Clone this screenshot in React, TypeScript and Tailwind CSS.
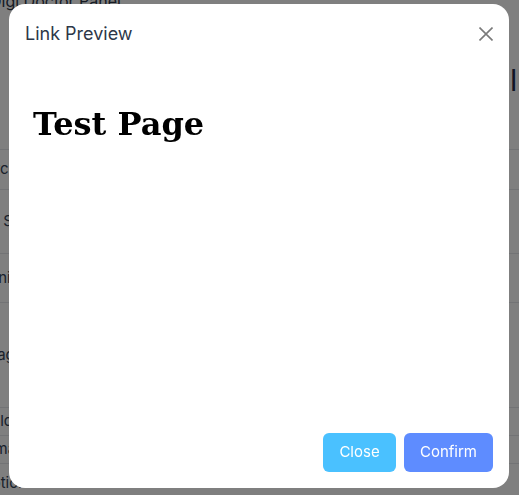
const rows = [
  { label: "Circles", h: "h-[40px]" },
  { label: "Bg Status", h: "h-[64px]" },
  { label: "Clinic", h: "h-[49px]" },
  { label: "Images", h: "h-[105px]" },
  { label: "Hold", h: "h-[28px]" },
  { label: "@mail", h: "h-[28px]" },
  { label: "Options", h: "h-[40px]" },
];

const XIcon = () => (
  <svg width="14" height="14" viewBox="0 0 14 14" fill="none">
    <path d="M0.5 0.5L13.5 13.5M13.5 0.5L0.5 13.5" stroke="#7a7a7a" strokeWidth="1.6" />
  </svg>
);

const LinkPreviewModal = () => {
  return (
    <div className="fixed inset-0 z-50 flex items-start justify-center bg-black/50 pt-1">
      <div className="-ml-px flex h-[484px] w-[500px] flex-col rounded-2xl bg-white">
        {/* Header */}
        <div className="flex items-center justify-between px-4 pt-4">
          <h2 className="h-7 text-[18px] leading-7 text-[#2d3748]" style={{ fontFamily: "Inter, sans-serif" }}>
            Link Preview
          </h2>
          <button className="flex h-7 w-[14px] items-center justify-center">
            <XIcon />
          </button>
        </div>

        {/* Preview frame */}
        <div className="flex-1 px-4 pt-[57px]">
          <div className="px-2">
            <h1
              className="text-[32px] font-bold text-black"
              style={{ fontFamily: '"DejaVu Serif", serif', lineHeight: "normal" }}
            >
              Test Page
            </h1>
          </div>
        </div>

        {/* Footer */}
        <div className="flex justify-end gap-2 px-4 pb-4" style={{ fontFamily: "Inter, sans-serif" }}>
          <button className="h-[39px] w-[73px] rounded-md bg-[#4ac1ff] text-[15px] text-white">Close</button>
          <button className="h-[39px] w-[89px] rounded-md bg-[#5e8cff] text-[15px] text-white">Confirm</button>
        </div>
      </div>
    </div>
  );
};

export default function App() {
  return (
    <div className="relative h-[495px] w-[519px] overflow-hidden bg-white" style={{ fontFamily: "Inter, sans-serif" }}>
      {/* Page behind the modal */}
      <div className="-ml-[10px] -mt-[7px] h-[16px] whitespace-nowrap text-[16px] leading-4 text-[#2d3748]">
        Digi Doctor Panel
      </div>
      <div className="flex h-[140px] items-start pt-[56px]">
        <div className="w-[510px] shrink-0" />
        <div className="whitespace-nowrap text-[30px] leading-[30px] text-[#1e2a4a]">ll</div>
      </div>
      <div className="border-t border-[#e5e7eb]">
        {rows.map((r) => (
          <div key={r.label} className={`flex items-center border-b border-[#e5e7eb] ${r.h}`}>
            <span className="-ml-[20px] text-[15px] text-[#334155]">{r.label}</span>
          </div>
        ))}
      </div>

      <LinkPreviewModal />
    </div>
  );
}
